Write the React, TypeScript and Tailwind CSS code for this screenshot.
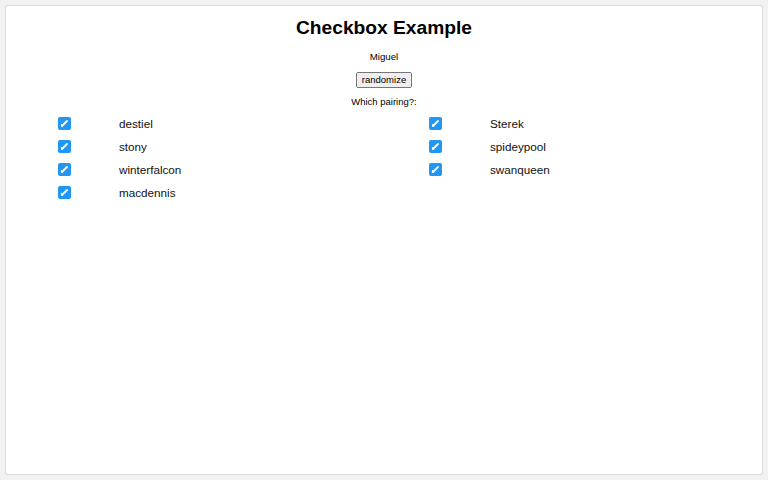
const left = ["destiel", "stony", "winterfalcon", "macdennis"];
const right = ["Sterek", "spideypool", "swanqueen"];

function Check() {
  return (
    <span className="w-[13px] h-[13px] rounded-[2px] bg-[#2196f3] flex items-center justify-center shrink-0">
      <svg width="9" height="9" viewBox="0 0 9 9">
        <path d="M2 7 L7 2" stroke="white" strokeWidth="1.8" strokeLinecap="round" />
        <path d="M2 7 L1.5 5.8" stroke="white" strokeWidth="1.4" strokeLinecap="round" />
      </svg>
    </span>
  );
}

function Item({ label }: { label: string }) {
  return (
    <div className="flex items-center h-[23px]">
      <Check />
      <span className="ml-[48px] text-[11.7px] text-[#111]">{label}</span>
    </div>
  );
}

export default function App() {
  return (
    <div
      className="w-[768px] h-[480px] bg-[#f2f2f2] p-[5px]"
      style={{ fontFamily: '"Liberation Sans", Arial, sans-serif' }}
    >
      <div className="h-[470px] bg-white border border-[#dcdcdc] rounded-[3px] flex flex-col items-center pt-[11px]">
        <h1 className="text-[19.2px] leading-[22px] font-bold text-black">Checkbox Example</h1>
        <p className="mt-[12px] text-[9.7px] leading-[12px] text-black">Miguel</p>
        <button className="mt-[9px] h-[16px] px-[5px] text-[9.5px] leading-[14px] bg-[#efefef] border border-[#767676] rounded-[2px] text-black">
          randomize
        </button>
        <p className="mt-[8px] text-[9.5px] leading-[12px] text-black">Which pairing?:</p>
        <div className="self-start ml-[52px] mt-[4px] grid grid-cols-[371px_371px]">
          <div className="flex flex-col">
            {left.map((l) => (
              <Item key={l} label={l} />
            ))}
          </div>
          <div className="flex flex-col">
            {right.map((l) => (
              <Item key={l} label={l} />
            ))}
          </div>
        </div>
      </div>
    </div>
  );
}
